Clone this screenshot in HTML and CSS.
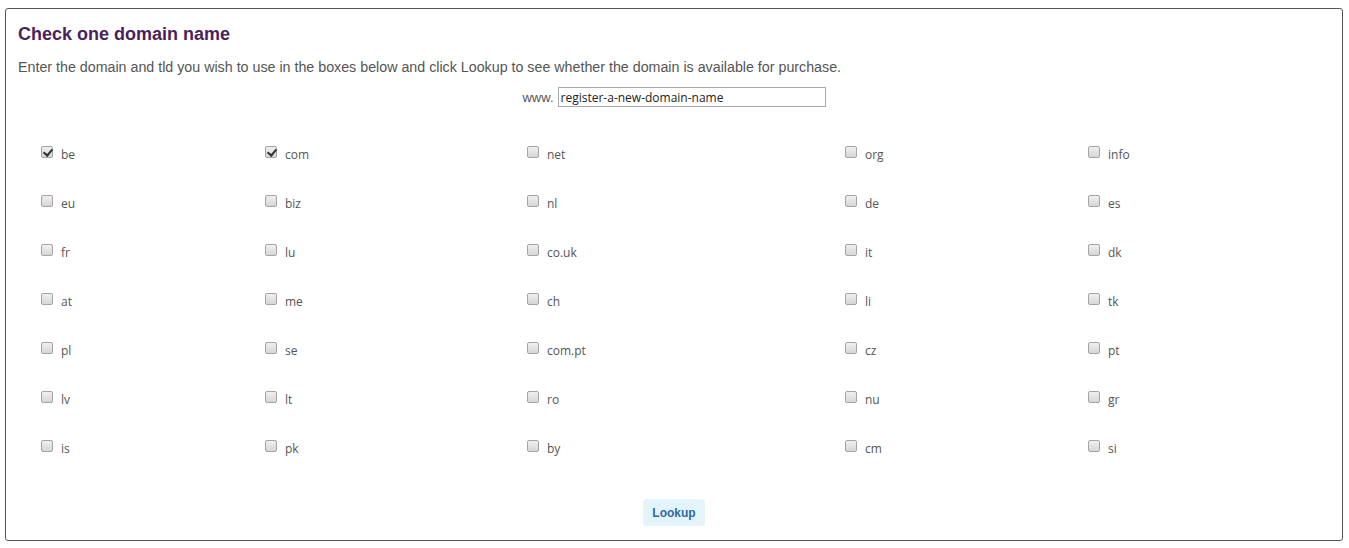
FILE: index.html
```html
<!DOCTYPE html>
<html lang="en">

<head>
    <meta charset="UTF-8">
    <meta name="viewport" content="width=device-width, initial-scale=1.0">
    <title>Check one domain name</title>
    <link rel="stylesheet" href="styles.css">
</head>

<body>
    <div class="container">
        <h1>Check one domain name</h1>
        <p class="intro">Enter the domain and tld you wish to use in the boxes below and click Lookup to see whether the domain is available for purchase.</p>
        <form id="lookupForm">
            <div class="domain-row">
                <span class="prefix">www.</span>
                <input type="text" id="domain" class="domain-input" value="register-a-new-domain-name" />
            </div>
            <div class="tld-grid">
                <label class="tld"><input type="checkbox" checked /><span>be</span></label>
                <label class="tld"><input type="checkbox" checked /><span>com</span></label>
                <label class="tld"><input type="checkbox" /><span>net</span></label>
                <label class="tld"><input type="checkbox" /><span>org</span></label>
                <label class="tld"><input type="checkbox" /><span>info</span></label>

                <label class="tld"><input type="checkbox" /><span>eu</span></label>
                <label class="tld"><input type="checkbox" /><span>biz</span></label>
                <label class="tld"><input type="checkbox" /><span>nl</span></label>
                <label class="tld"><input type="checkbox" /><span>de</span></label>
                <label class="tld"><input type="checkbox" /><span>es</span></label>

                <label class="tld"><input type="checkbox" /><span>fr</span></label>
                <label class="tld"><input type="checkbox" /><span>lu</span></label>
                <label class="tld"><input type="checkbox" /><span>co.uk</span></label>
                <label class="tld"><input type="checkbox" /><span>it</span></label>
                <label class="tld"><input type="checkbox" /><span>dk</span></label>

                <label class="tld"><input type="checkbox" /><span>at</span></label>
                <label class="tld"><input type="checkbox" /><span>me</span></label>
                <label class="tld"><input type="checkbox" /><span>ch</span></label>
                <label class="tld"><input type="checkbox" /><span>li</span></label>
                <label class="tld"><input type="checkbox" /><span>tk</span></label>

                <label class="tld"><input type="checkbox" /><span>pl</span></label>
                <label class="tld"><input type="checkbox" /><span>se</span></label>
                <label class="tld"><input type="checkbox" /><span>com.pt</span></label>
                <label class="tld"><input type="checkbox" /><span>cz</span></label>
                <label class="tld"><input type="checkbox" /><span>pt</span></label>

                <label class="tld"><input type="checkbox" /><span>lv</span></label>
                <label class="tld"><input type="checkbox" /><span>lt</span></label>
                <label class="tld"><input type="checkbox" /><span>ro</span></label>
                <label class="tld"><input type="checkbox" /><span>nu</span></label>
                <label class="tld"><input type="checkbox" /><span>gr</span></label>

                <label class="tld"><input type="checkbox" /><span>is</span></label>
                <label class="tld"><input type="checkbox" /><span>pk</span></label>
                <label class="tld"><input type="checkbox" /><span>by</span></label>
                <label class="tld"><input type="checkbox" /><span>cm</span></label>
                <label class="tld"><input type="checkbox" /><span>si</span></label>
            </div>
            <div class="actions">
                <button type="submit" class="button">Lookup</button>
            </div>
        </form>
    </div>
</body>

</html>
```

FILE: styles.css
```css
body {
    font-family: "Liberation Sans", Arial, sans-serif;
    margin: 0;
    padding: 8px 6px 0 5px;
    background-color: #ffffff;
}

.container {
    border: 1px solid #555;
    border-radius: 3px;
    height: 531px;
    padding: 0 12px;
    box-sizing: content-box;
}

h1 {
    margin: 15px 0 0;
    font-size: 18px;
    line-height: 21px;
    color: #4a1f5c;
}

.intro {
    margin: 14px 0 0;
    font-size: 14.25px;
    line-height: 16px;
    color: #555;
}

.domain-row {
    display: flex;
    justify-content: center;
    align-items: center;
    margin-top: 12px;
    gap: 4px;
}

.prefix {
    font-size: 13px;
    color: #555;
}

.domain-input {
    width: 262px;
    height: 18px;
    padding: 0 2px;
    margin: 0;
    border: 1px solid #a9a9a9;
    font-family: "Open Sans", sans-serif;
    font-size: 12px;
    color: #222;
    box-sizing: content-box;
}

.tld-grid {
    display: grid;
    grid-template-columns: 224px 262px 318px 243px auto;
    grid-auto-rows: 49px;
    margin-top: 22px;
    padding-left: 23px;
}

.tld {
    display: flex;
    align-items: center;
    height: 49px;
    font-family: "Open Sans", sans-serif;
    font-size: 12px;
    color: #555;
}

.tld input {
    appearance: none;
    -webkit-appearance: none;
    width: 12px;
    height: 12px;
    margin: 0 8px 0 0;
    border: 1px solid #a4a4a4;
    border-radius: 2px;
    background: linear-gradient(#f0f0f0, #d6d6d6);
    position: relative;
    top: -2px;
}

.tld input:checked::after {
    content: "";
    position: absolute;
    left: 3px;
    top: 0;
    width: 4px;
    height: 7px;
    border: solid #333;
    border-width: 0 2px 2px 0;
    transform: rotate(40deg);
}

.tld span {
    padding-top: 2px;
}

.actions {
    display: flex;
    justify-content: center;
    margin-top: 27px;
}

.button {
    width: 62px;
    height: 27px;
    padding: 0;
    font-family: "Liberation Sans", Arial, sans-serif;
    font-size: 12px;
    font-weight: bold;
    background-color: #e4f4fc;
    color: #2f6aa6;
    border: none;
    border-radius: 4px;
    cursor: pointer;
}

.button:hover {
    background-color: #d4ecf9;
}
```
